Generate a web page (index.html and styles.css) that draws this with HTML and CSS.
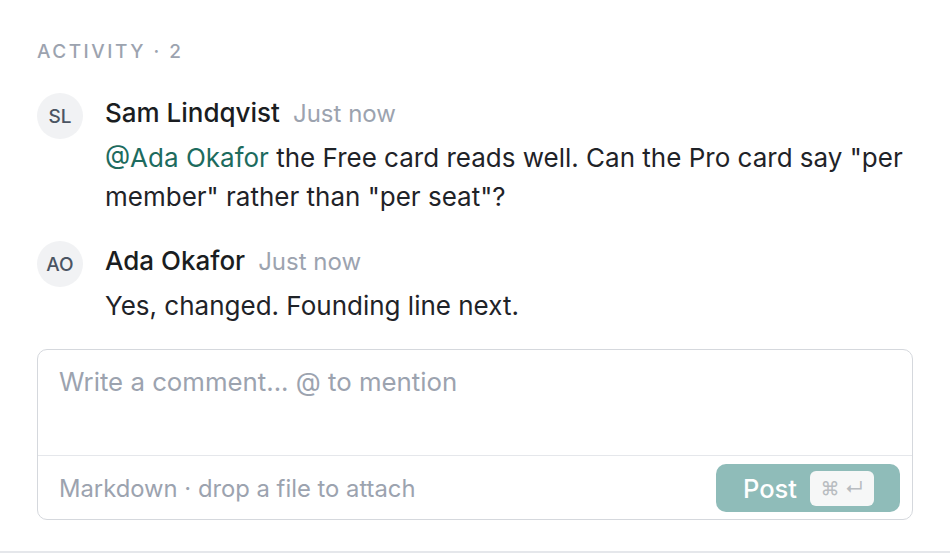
FILE: index.html
```html
<!DOCTYPE html>
<html lang="en">
<head>
  <meta charset="UTF-8" />
  <meta name="viewport" content="width=device-width, initial-scale=1.0"/>
  <title>Activity</title>
  <link rel="stylesheet" href="styles.css">
</head>
<body>
  <section class="activity">
    <h3 class="activity-title">Activity · 2</h3>

    <div class="comments">
      <div class="comment">
        <div class="avatar">SL</div>
        <div class="comment-body">
          <div class="comment-head">
            <span class="author">Sam Lindqvist</span>
            <span class="time">Just now</span>
          </div>
          <p class="comment-text"><span class="mention">@Ada Okafor</span> the Free card reads well. Can the Pro card say "per member" rather than "per seat"?</p>
        </div>
      </div>

      <div class="comment">
        <div class="avatar">AO</div>
        <div class="comment-body">
          <div class="comment-head">
            <span class="author">Ada Okafor</span>
            <span class="time">Just now</span>
          </div>
          <p class="comment-text">Yes, changed. Founding line next.</p>
        </div>
      </div>
    </div>

    <div class="composer">
      <textarea class="composer-input" placeholder="Write a comment... @ to mention"></textarea>
      <div class="composer-foot">
        <span class="hint">Markdown · drop a file to attach</span>
        <button class="post-btn" disabled>
          Post
          <span class="kbd">⌘ ↵</span>
        </button>
      </div>
    </div>
  </section>
</body>
</html>
```

FILE: styles.css
```css
* {
  box-sizing: border-box;
}

body {
  margin: 0;
  padding: 0;
  font-family: Inter, 'Noto Sans', sans-serif;
  background: #fff;
  color: #1f2328;
}

.activity {
  padding: 38px 37px 0;
  height: 553px;
  border-bottom: 2px solid #e5e7eb;
}

.activity-title {
  margin: 0 0 27px;
  font-size: 19px;
  font-weight: 500;
  line-height: 28px;
  letter-spacing: 2.5px;
  text-transform: uppercase;
  color: #9ca3af;
}

.comments {
  display: flex;
  flex-direction: column;
  gap: 25px;
  margin-bottom: 24px;
}

.comment {
  display: flex;
  gap: 22px;
}

.avatar {
  flex: none;
  width: 46px;
  height: 46px;
  border-radius: 50%;
  background: #f1f2f4;
  color: #4b5563;
  font-size: 19px;
  font-weight: 500;
  display: flex;
  align-items: center;
  justify-content: center;
}

.comment-body {
  flex: 1;
}

.comment-head {
  display: flex;
  align-items: baseline;
  gap: 13px;
  line-height: 40px;
}

.author {
  font-size: 26px;
  font-weight: 500;
  color: #1a1d21;
}

.time {
  font-size: 24px;
  color: #9ca3af;
}

.comment-text {
  margin: 4px 0 0;
  font-size: 26px;
  line-height: 39px;
  color: #1f2328;
}

.mention {
  color: #1d6b5e;
}

.composer {
  border: 1.5px solid #d5d8dd;
  border-radius: 10px;
}

.composer-input {
  display: block;
  width: 100%;
  height: 106px;
  resize: none;
  border: none;
  outline: none;
  padding: 17px 21px;
  font-family: inherit;
  font-size: 25.8px;
  line-height: 30px;
  background: transparent;
  border-bottom: 1.5px solid #e5e7eb;
}

.composer-input::placeholder {
  color: #9ca3af;
}

.composer-foot {
  display: flex;
  align-items: center;
  justify-content: space-between;
  padding: 8px 12px 7px 21px;
}

.hint {
  font-size: 23.8px;
  color: #9ca3af;
}

.post-btn {
  display: flex;
  align-items: center;
  gap: 13px;
  height: 48px;
  padding: 0 26px 0 27px;
  border: none;
  border-radius: 10px;
  background: #8fbcb9;
  color: #fff;
  font-family: inherit;
  font-size: 25.5px;
  font-weight: 500;
}

.kbd {
  display: flex;
  align-items: center;
  justify-content: center;
  width: 64px;
  height: 35px;
  border-radius: 6px;
  background: #f6f7f7;
  color: #b8bcc0;
  font-size: 19px;
  font-weight: 400;
}
```
